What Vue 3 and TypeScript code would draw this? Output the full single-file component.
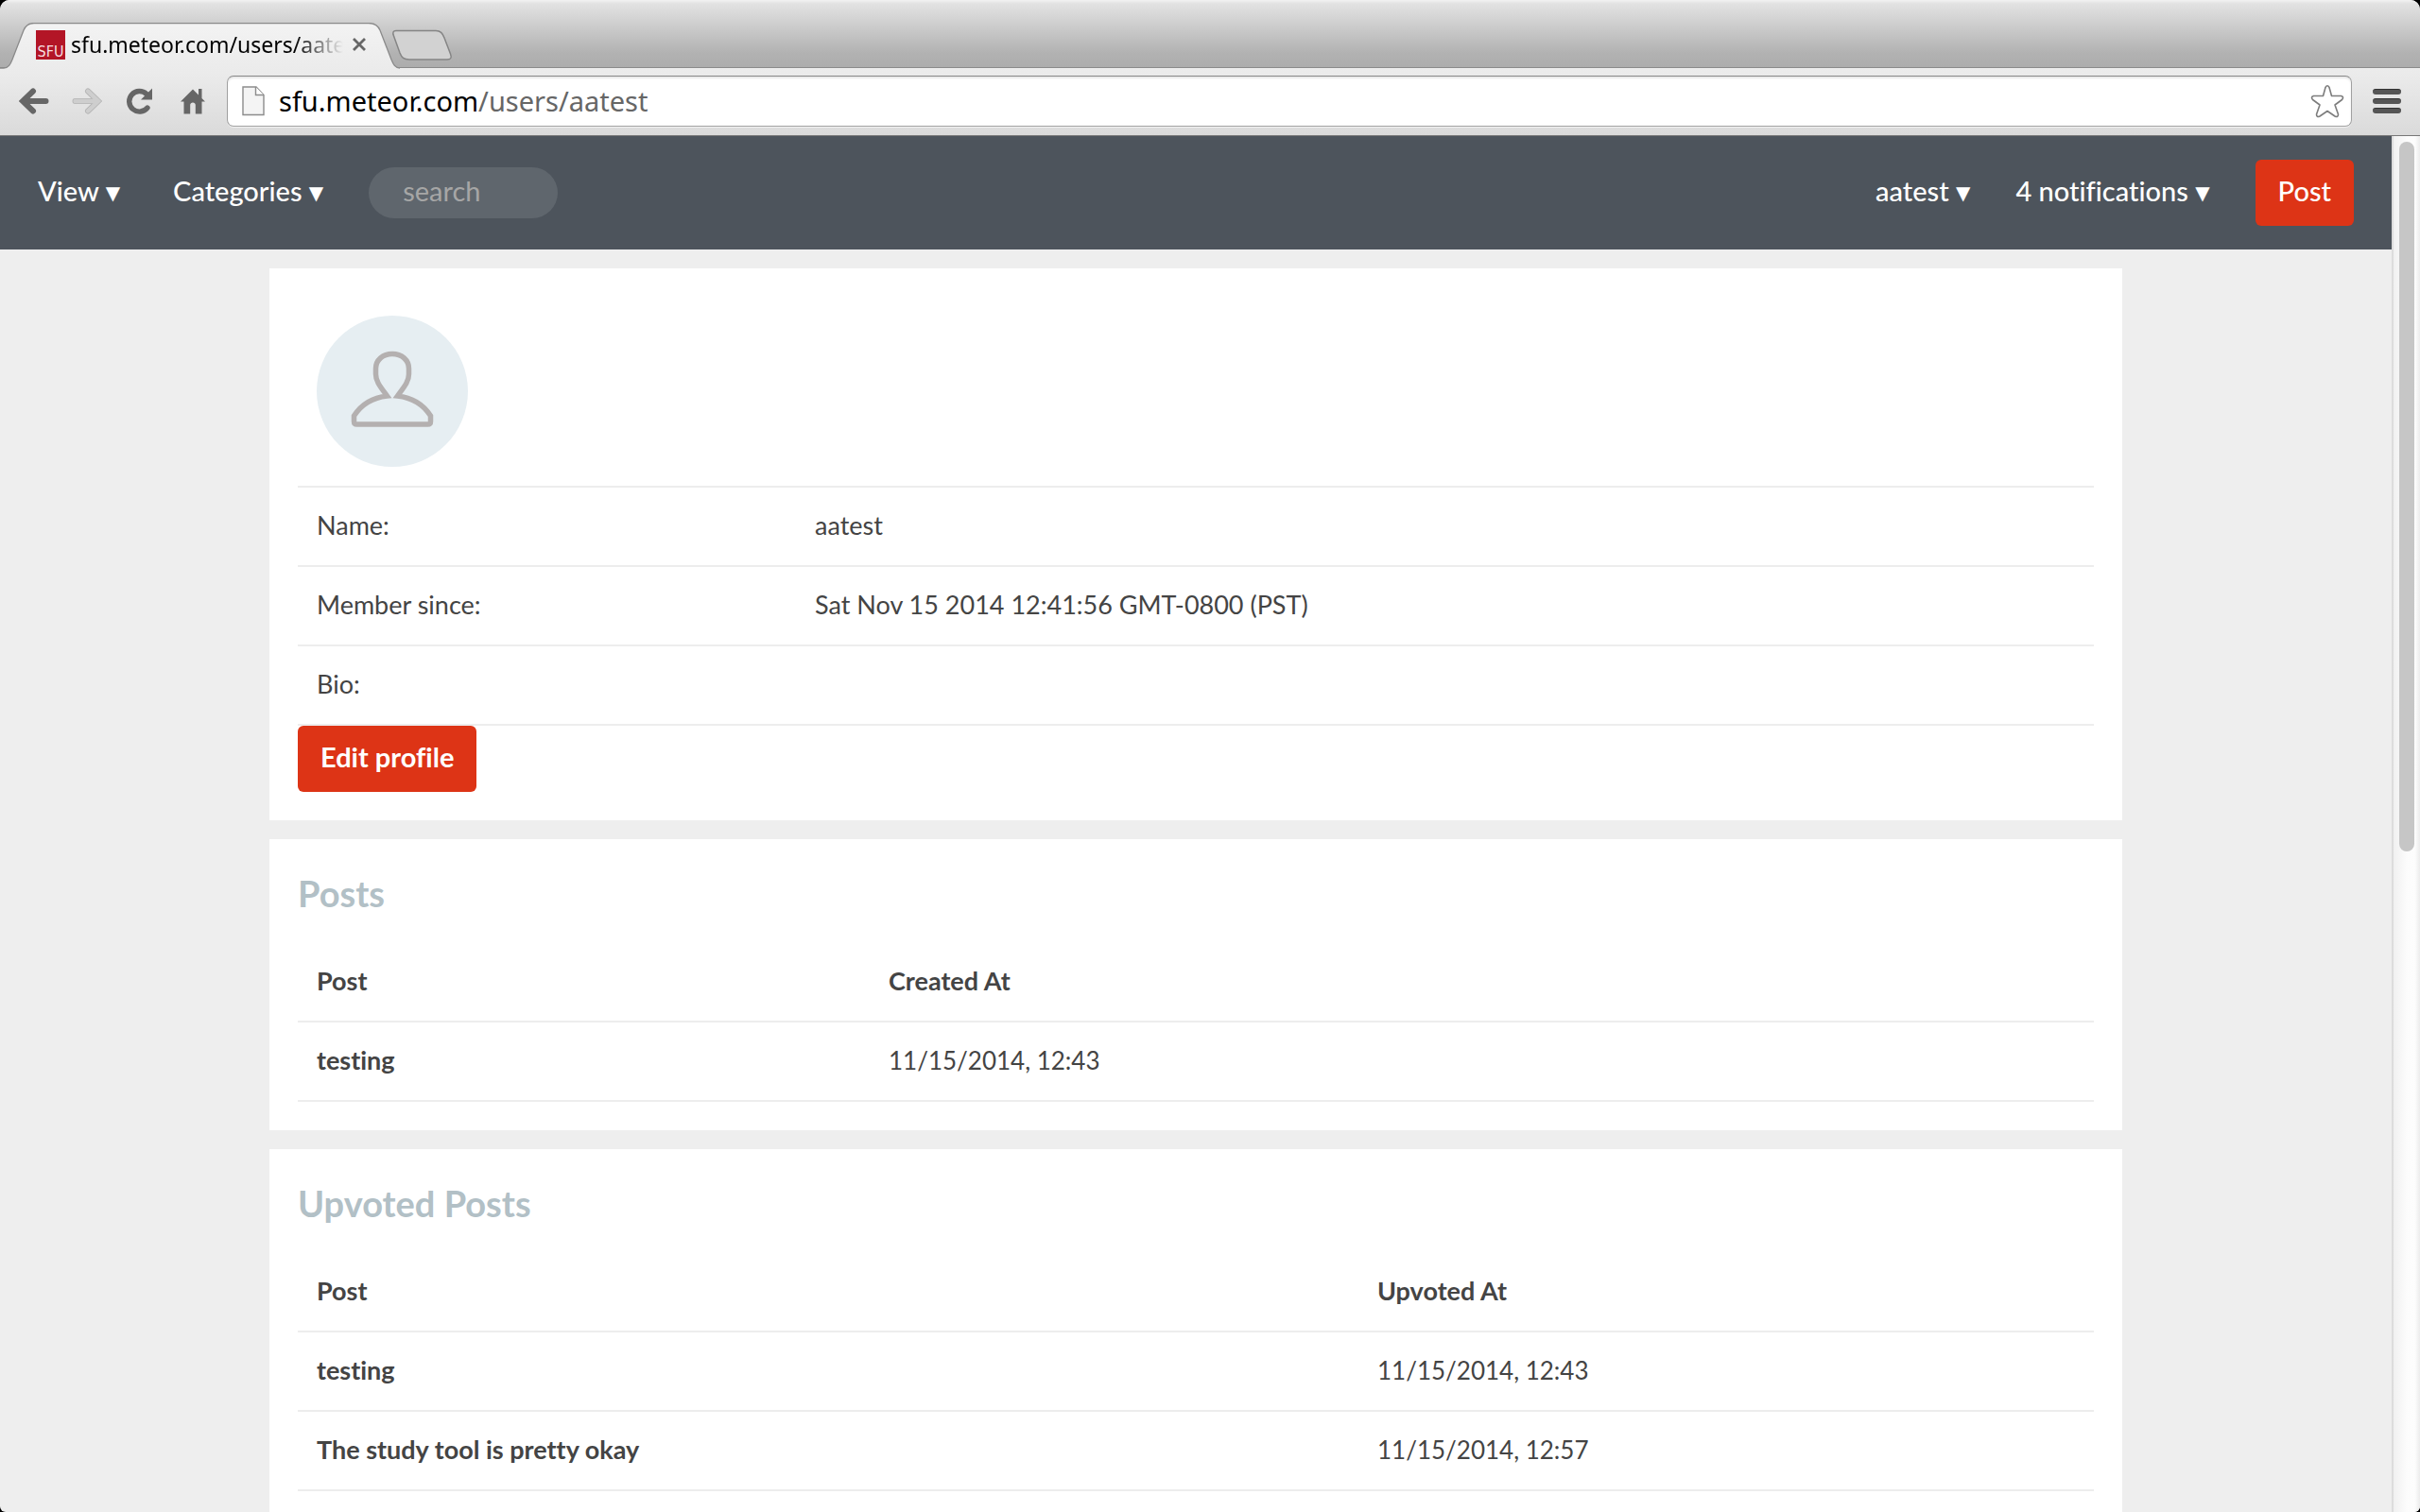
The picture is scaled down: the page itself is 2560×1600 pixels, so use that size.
<script setup lang="ts">
interface ProfileField {
  label: string
  value: string
}

interface PostRow {
  title: string
  date: string
}

interface PostTable {
  id: string
  heading: string
  dateLabel: string
  layout: string
  rows: PostRow[]
}

const host = 'sfu.meteor.com'
const path = '/users/aatest'

const fields: ProfileField[] = [
  { label: 'Name:', value: 'aatest' },
  { label: 'Member since:', value: 'Sat Nov 15 2014 12:41:56 GMT-0800 (PST)' },
  { label: 'Bio:', value: '' },
]

const tables: PostTable[] = [
  {
    id: 'posts',
    heading: 'Posts',
    dateLabel: 'Created At',
    layout: 'col-narrow',
    rows: [{ title: 'testing', date: '11/15/2014, 12:43' }],
  },
  {
    id: 'upvoted',
    heading: 'Upvoted Posts',
    dateLabel: 'Upvoted At',
    layout: 'col-wide',
    rows: [
      { title: 'testing', date: '11/15/2014, 12:43' },
      { title: 'The study tool is pretty okay', date: '11/15/2014, 12:57' },
    ],
  },
]

// Percentage of the scroll track that the thumb covers
const visibleShare = 52
</script>

<template>
  <div class="window">
    <div class="tab-strip">
      <div class="tab">
        <svg class="tab-shape" viewBox="0 0 424 50" aria-hidden="true">
          <defs>
            <linearGradient id="tab-fill" x1="0" y1="0" x2="0" y2="1">
              <stop offset="0" stop-color="#f3f3f3" />
              <stop offset="1" stop-color="#ebebeb" />
            </linearGradient>
          </defs>
          <path d="M0 50V48H4C9 48 11 44 13 39L25 8C27 3 30 .5 36 .5H390C397 .5 400 3 402 8L414 39C416 44 418 48 423 48H424V50Z" fill="url(#tab-fill)" />
          <path d="M0 48H4C9 48 11 44 13 39L25 8C27 3 30 .5 36 .5H390C397 .5 400 3 402 8L414 39C416 44 418 48 423 48" fill="none" stroke="#8a8a8a" stroke-width="1.3" />
        </svg>
        <span class="favicon">SFU</span>
        <span class="tab-title">{{ host }}{{ path }}</span>
        <button class="tab-close" type="button" aria-label="Close tab">
          <svg viewBox="0 0 14 14"><path d="M1 1L13 13M13 1L1 13" stroke="#666" stroke-width="2.8" fill="none" /></svg>
        </button>
      </div>
      <button class="new-tab" type="button" aria-label="New tab">
        <svg viewBox="0 0 66 34">
          <path d="M5 1.500H47C52 1.500 54 4 56 9L62.500 26C64 30 63 32 59 32H19C13 32 11 30 9 25L2.500 7C1 3 2 1.500 5 1.500Z" fill="#d2d2d2" stroke="#858585" stroke-width="1.500" />
        </svg>
      </button>
    </div>

    <div class="toolbar">
      <div class="nav-buttons">
        <button type="button" aria-label="Back">
          <svg viewBox="0 0 32 28"><path d="M28.500 14H6M15 3.500L4 14L15 24.500" fill="none" stroke="#666" stroke-width="6" stroke-linecap="round" /></svg>
        </button>
        <button type="button" aria-label="Forward">
          <svg viewBox="0 0 32 28"><path d="M3.500 14H26M17 3.500L28 14L17 24.500" fill="none" stroke="#b5b5b5" stroke-width="6" stroke-linecap="round" /><path d="M3.500 14H26M17 3.500L28 14L17 24.500" fill="none" stroke="#cecece" stroke-width="4.400" stroke-linecap="round" /></svg>
        </button>
        <button type="button" aria-label="Reload">
          <svg viewBox="0 0 32 28"><path d="M24 21A10.800 10.800 0 1 1 23 6.500" fill="none" stroke="#666" stroke-width="5.400" stroke-linecap="round" /><path d="M29 .5V12.500H17Z" fill="#666" /></svg>
        </button>
        <button type="button" aria-label="Home">
          <svg viewBox="0 0 32 28"><path d="M16 1.500L22 7.500V1H25.500V11L29 14.500H25.500V27.500H18.800V18C18.800 14.500 13.200 14.500 13.200 18V27.500H6.500V14.500H3Z" fill="#666" /></svg>
        </button>
      </div>
      <div class="address">
        <svg class="page-icon" viewBox="0 0 24 32" aria-hidden="true">
          <path d="M1 1H15L23 9.500V30.500H1Z" fill="#f4f4f4" stroke="#8c8c8c" stroke-width="1.400" />
          <path d="M14.500 1V9.500H23" fill="#fff" stroke="#8c8c8c" stroke-width="1.400" />
        </svg>
        <a class="url" href="#profile"><span class="url-host">{{ host }}</span>{{ path }}</a>
        <button class="star" type="button" aria-label="Bookmark this page">
          <svg viewBox="0 0 36 36"><path d="M16 3.500Q18 0 20 3.500L22.500 12.500H32.500Q36 13.500 33.500 16.500L26 22L29.500 32Q29.500 35.500 26 34L18 28.500L10 34Q6.500 35.500 6.500 32L10 22L2.500 16.500Q0 13.500 3.500 12.500H13.500Z" fill="#fff" stroke="#7d7d7d" stroke-width="1.600" stroke-linejoin="round" /></svg>
        </button>
      </div>
      <button class="menu" type="button" aria-label="Menu">
        <span></span><span></span><span></span>
      </button>
    </div>

    <div class="viewport">
      <div class="page">
        <header class="site-header">
          <nav class="group">
            <a href="#view">View <span class="caret">▼</span></a>
            <a href="#categories">Categories <span class="caret">▼</span></a>
            <input type="search" placeholder="search" aria-label="Search" />
          </nav>
          <nav class="group">
            <a href="#account">aatest <span class="caret">▼</span></a>
            <a href="#notifications">4 notifications <span class="caret">▼</span></a>
            <button class="action" type="button">Post</button>
          </nav>
        </header>

        <main class="content">
          <section id="profile" class="card">
            <div class="avatar-row">
              <svg class="avatar" viewBox="0 0 160 160" role="img" aria-label="User avatar">
                <circle cx="80" cy="80" r="80" fill="#e6eef2" />
                <path d="M74.500 85C68 76 62.500 70 62.500 62V56C62.500 47 70 40.500 80 40.500S97.500 47 97.500 56V62C97.500 70 92 76 85.500 85C103 87 114 96 120.500 106V112Q120.500 115 117.500 115H42.500Q39.500 115 39.500 112V106C46 96 57 87 74.500 85Z" fill="none" stroke="#b4b0b0" stroke-width="5.500" />
              </svg>
            </div>
            <table class="col-profile">
              <colgroup><col class="first" /><col /></colgroup>
              <tbody>
                <tr v-for="field in fields" :key="field.label">
                  <th scope="row" class="field-label">{{ field.label }}</th>
                  <td>{{ field.value }}</td>
                </tr>
              </tbody>
            </table>
            <button class="action strong" type="button">Edit profile</button>
          </section>

          <section v-for="table in tables" :key="table.id" class="card">
            <h2 :id="table.id">{{ table.heading }}</h2>
            <table :class="table.layout" :aria-labelledby="table.id">
              <colgroup><col class="first" /><col /></colgroup>
              <thead>
                <tr>
                  <th scope="col">Post</th>
                  <th scope="col">{{ table.dateLabel }}</th>
                </tr>
              </thead>
              <tbody>
                <tr v-for="row in table.rows" :key="row.title">
                  <td><a class="post-link" href="#post">{{ row.title }}</a></td>
                  <td class="date">{{ row.date }}</td>
                </tr>
              </tbody>
            </table>
          </section>
        </main>
      </div>
      <div class="scrollbar" aria-hidden="true">
        <div class="thumb" :style="{ height: visibleShare + '%' }"></div>
      </div>
    </div>
  </div>
</template>

<style>
body {
  background: #000;
}
</style>

<style scoped>
* {
  box-sizing: border-box;
}

button {
  border: 0;
  padding: 0;
  background: none;
  font: inherit;
  color: inherit;
}

svg {
  display: block;
  flex: none;
}

a {
  color: inherit;
  text-decoration: none;
}

.window {
  display: flex;
  flex-direction: column;
  height: 100vh;
  overflow: hidden;
  border-radius: 10px 10px 6px 6px;
  background: #eee;
  font-family: Lato, "Open Sans", sans-serif;
  font-size: 27px;
  line-height: 42px;
  font-variant-ligatures: none;
  color: #444;
}

/* Browser chrome */
.tab-strip {
  display: flex;
  align-items: flex-end;
  flex: none;
  height: 72px;
  background: linear-gradient(#f2f2f2, #e2e2e2 4px, #b2b2b2 56px, #acacac);
  box-shadow: inset 0 -1px #8a8a8a;
  font-family: "Noto Sans", sans-serif;
}

.tab {
  position: relative;
  display: flex;
  align-items: center;
  width: 424px;
  height: 48px;
  padding: 0 36px 2px 38px;
}

.tab-shape {
  position: absolute;
  left: 0;
  top: 0;
  width: 424px;
  height: 50px;
}

.favicon {
  position: relative;
  display: flex;
  align-items: flex-end;
  justify-content: center;
  flex: none;
  width: 31px;
  height: 31px;
  margin-right: 6px;
  background: #b31526;
  color: #f6dfe1;
  font: 16px/16px "DejaVu Sans Condensed", "DejaVu Sans", sans-serif;
}

.tab-title {
  position: relative;
  flex: none;
  width: 288px;
  overflow: hidden;
  white-space: nowrap;
  color: #000;
  font-size: 23px;
  line-height: 32px;
  mask-image: linear-gradient(90deg, #000 82%, transparent);
}

.tab-close {
  position: relative;
  margin-left: 10px;
}

.tab-close svg {
  width: 14px;
  height: 14px;
}

.new-tab {
  position: relative;
  align-self: flex-start;
  margin: 31px 0 0 -10px;
}

.new-tab svg {
  width: 66px;
  height: 34px;
}

.toolbar {
  display: flex;
  align-items: center;
  flex: none;
  height: 72px;
  padding: 0 20px 2px;
  background: linear-gradient(#ececec, #e9e9e9 20%, #dadada);
  border-bottom: 1px solid #777;
  font-family: "Noto Sans", sans-serif;
}

.nav-buttons {
  display: flex;
  gap: 24px;
  width: 220px;
  flex: none;
}

.nav-buttons svg {
  width: 32px;
  height: 28px;
}

.address {
  display: flex;
  align-items: center;
  flex: 1;
  height: 54px;
  padding: 0 7px 0 15px;
  background: #fff;
  border: 1px solid #a0a0a0;
  border-top-color: #888;
  border-radius: 7px;
  box-shadow: inset 0 2px 2px #e8e8e8, 0 1px #f2f2f2;
}

.page-icon {
  width: 24px;
  height: 32px;
}

.url {
  flex: 1;
  padding-left: 15px;
  font-size: 29px;
  line-height: 40px;
  color: #666;
}

.url-host {
  color: #000;
}

.star svg {
  width: 36px;
  height: 36px;
}

.menu {
  display: flex;
  flex-direction: column;
  gap: 4px;
  width: 30px;
  margin-left: 22px;
}

.menu span {
  height: 6px;
  border-radius: 3px;
  background: #555;
  border-top: 1px solid #333;
}

/* Page */
.viewport {
  display: flex;
  flex: 1;
  min-height: 0;
}

.page {
  display: flex;
  flex-direction: column;
  flex: 1;
  overflow: hidden;
}

.site-header {
  display: flex;
  align-items: center;
  justify-content: space-between;
  flex: none;
  height: 120px;
  padding: 0 40px;
  background: #4d545c;
  color: #fff;
  font-size: 29px;
  font-weight: 500;
}

.group {
  display: flex;
  align-items: center;
  gap: 48px;
}

.group a {
  padding-bottom: 4px;
}

.group:first-child a:first-child {
  margin-right: 8px;
}

.caret {
  font-family: "DejaVu Sans", sans-serif;
  font-size: 20px;
  line-height: 20px;
  vertical-align: 2px;
}

.site-header input {
  width: 200px;
  height: 54px;
  padding: 0 36px 6px;
  border: 0;
  border-radius: 27px;
  background: #5f666d;
  color: #fff;
  font: 400 29px/42px Lato, "Open Sans", sans-serif;
  appearance: none;
}

.site-header input::placeholder {
  color: #a6a6a6;
  opacity: 1;
}

.action {
  display: block;
  height: 70px;
  padding: 0 24px 4px;
  border-radius: 6px;
  background: #dd3416;
  color: #fff;
  font-size: 29px;
  font-weight: 500;
}

.action.strong {
  font-weight: 700;
}

.content {
  display: flex;
  flex-direction: column;
  flex: 1;
  gap: 20px;
  width: 1960px;
  max-width: 100%;
  margin: 20px auto 0;
}

.card {
  flex: none;
  padding: 30px;
  background: #fff;
}

.card:last-child {
  flex: 1 0 auto;
}

.avatar-row {
  padding: 20px;
  border-bottom: 2px solid #ededed;
}

.avatar {
  width: 160px;
  height: 160px;
}

h2 {
  margin: 0 0 26px;
  color: #b2c0c6;
  font-size: 38px;
  line-height: 54px;
}

table {
  width: 100%;
  table-layout: fixed;
  border-collapse: separate;
  border-spacing: 0;
}

th,
td {
  height: 84px;
  padding: 19px 20px 21px;
  border-bottom: 2px solid #ededed;
  text-align: left;
}

.field-label {
  font-weight: 400;
}

.post-link {
  font-weight: 700;
}

.date {
  font-size: 26px;
}

.col-profile .first {
  width: 527px;
}

.col-narrow .first {
  width: 605px;
}

.col-wide .first {
  width: 1122px;
}

.scrollbar {
  flex: none;
  width: 30px;
  padding: 6px;
  border-left: 2px solid #dcdcdc;
  background: linear-gradient(90deg, #f0f0f0, #fcfcfc 50%, #fdfdfd 80%, #ececec);
}

.thumb {
  width: 16px;
  border-radius: 8px;
  background: #c6c6c6;
}
</style>
